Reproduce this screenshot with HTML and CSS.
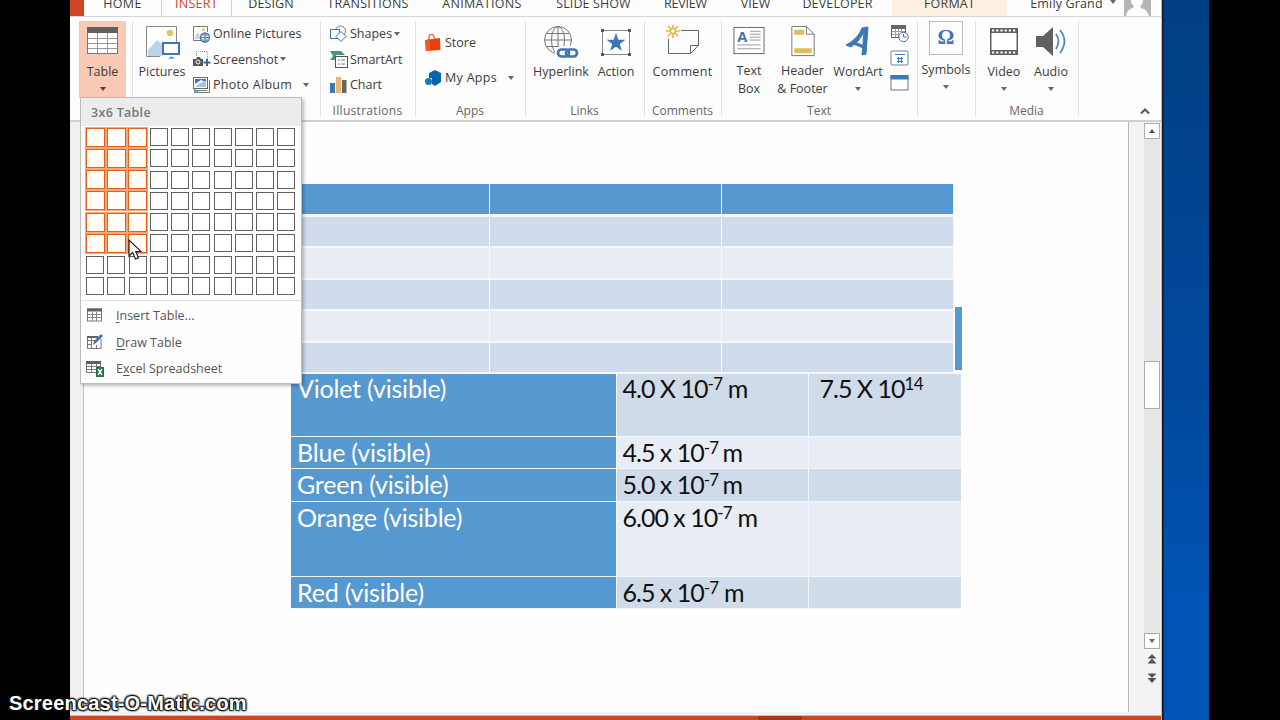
FILE: index.html
```html
<!DOCTYPE html>
<html lang="en">
<head>
  <meta charset="UTF-8">
  <meta name="viewport" content="width=device-width, initial-scale=1.0">
  <title>Presentation</title>
  <link rel="stylesheet" href="styles.css">
</head>
<body>
  <div class="window">
    <div class="tabs">
      <div class="file"></div>
      <div class="tab home"><span>HOME</span></div>
      <div class="tab insert active"><span>INSERT</span></div>
      <div class="tab design"><span>DESIGN</span></div>
      <div class="tab transitions"><span>TRANSITIONS</span></div>
      <div class="tab animations"><span>ANIMATIONS</span></div>
      <div class="tab slideshow"><span>SLIDE SHOW</span></div>
      <div class="tab review"><span>REVIEW</span></div>
      <div class="tab view"><span>VIEW</span></div>
      <div class="tab developer"><span>DEVELOPER</span></div>
      <div class="tab format"><span>FORMAT</span></div>
      <div class="tab user"><span>Emily Grand</span><i class="arrow"></i></div>
      <svg class="avatar" width="27" height="16" viewBox="0 0 27 16"><rect width="27" height="16" fill="#b5b5b5"/><path d="M7 0h12q0 4-3 6l1 2q6 1 8 8H2q1-7 7-8l1-2Q7 4 7 0z" fill="#fff"/></svg>
    </div>

    <div class="ribbon">
      <div class="group g-tables">
        <div class="big table-btn">
          <svg width="33" height="34" viewBox="0 0 33 34"><rect x="1.5" y="3.500" width="30" height="25" fill="#fff" stroke="#777"/><rect x="1" y="2" width="31" height="6" fill="#606060"/><path d="M2 13.500h29M2 18.500h29M2 23.500h29M11.500 8v20M21.500 8v20" stroke="#999" fill="none"/></svg>
          <span>Table</span>
          <i class="arrow dark"></i>
        </div>
      </div>

      <div class="group g-images">
        <div class="body">
          <div class="big pictures">
            <svg width="36" height="34" viewBox="0 0 36 34"><path d="M16 31.500H2.500v-30h30V18" fill="#fff" stroke="#888"/><circle cx="26" cy="8" r="3.300" fill="#e6c366"/><path d="M4 31v-6l9-10 5 4v12z" fill="#bdd3ea"/><rect x="19" y="18" width="16" height="11" fill="#fff" stroke="#3f76b5" stroke-width="2"/><path d="M24 33.500l3.500-2 3.500 2z" fill="#3f76b5"/></svg>
            <span>Pictures</span>
          </div>
          <div class="rows">
            <div class="row"><svg width="19" height="18" viewBox="0 0 19 18"><path d="M9 15.500H1.500v-14h14V7" fill="#fff" stroke="#777"/><path d="M3 14l1-5 3-1 1 6z" fill="#bdd3ea"/><circle cx="11.500" cy="4.500" r="1.500" fill="#e6c366"/><circle cx="13" cy="12.500" r="4.500" fill="#fff" stroke="#3f76b5" stroke-width="1.400"/><path d="M9 12.500h8M10 10h6M10 15h6M13 8v9" stroke="#3f76b5" fill="none"/></svg><span>Online Pictures</span></div>
            <div class="row"><svg width="19" height="18" viewBox="0 0 19 18"><path d="M4.500 6V1.500h11V9" fill="none" stroke="#999" stroke-dasharray="1 1"/><path d="M1 9h3l1-2h3l1 2h2v7H1z" fill="#555"/><circle cx="6" cy="12" r="2" fill="#555" stroke="#fff"/><path d="M15 9v7M11.500 12.500h7" stroke="#2f6cab" stroke-width="2"/></svg><span>Screenshot</span><i class="arrow"></i></div>
            <div class="row"><svg width="19" height="18" viewBox="0 0 19 18"><path d="M4 16.500h13.500V4M2 14.500h13" fill="none" stroke="#777"/><rect x="1.500" y="1.500" width="14" height="11" fill="#fff" stroke="#666"/><path d="M3 3h11v3L9 4 3 8z" fill="#3f76b5"/><path d="M3 11l5-4 6-2v6z" fill="#a5c7dc"/><path d="M2 17v-5l6 5z" fill="#5c9fc0"/></svg><span class="wide">Photo Album</span><i class="arrow far"></i></div>
          </div>
        </div>
        <div class="label">Images</div>
      </div>

      <div class="group g-illustrations">
        <div class="body">
          <div class="rows">
            <div class="row"><svg width="19" height="18" viewBox="0 0 19 18"><circle cx="11.500" cy="6" r="5" fill="#fff" stroke="#5a83b0"/><rect x="1.500" y="4.500" width="9" height="9" fill="#fff" stroke="#3f76b5"/><path d="M12 6.500l5 5-5 5-5-5z" fill="#fff" stroke="#3f76b5"/></svg><span>Shapes</span><i class="arrow"></i></div>
            <div class="row"><svg width="19" height="18" viewBox="0 0 19 18"><path d="M1 1h11l4 4H7v5H1l3-4z" fill="#4c9478"/><rect x="6.500" y="6.500" width="12" height="11" fill="#fff" stroke="#555"/><path d="M9 10h2M12 10h4M9 14h2M12 14h4" stroke="#777"/></svg><span>SmartArt</span></div>
            <div class="row"><svg width="19" height="18" viewBox="0 0 19 18"><rect x="1" y="7" width="5" height="10" fill="#3f76b5"/><rect x="7" y="1" width="5" height="16" fill="#edb56c"/><rect x="13" y="4" width="4.500" height="13" fill="#666"/></svg><span>Chart</span></div>
          </div>
        </div>
        <div class="label">Illustrations</div>
      </div>

      <div class="group g-apps">
        <div class="body">
          <div class="rows">
            <div class="row"><svg width="18" height="18" viewBox="0 0 18 18"><path d="M5 6V2q2-3 4-1l2 4" fill="none" stroke="#e9653b" stroke-width="1.300"/><path d="M1 6l15-2 .5 12L2 17z" fill="#e8400c"/><path d="M1 6l5-.5V17l-4-1z" fill="#f05a28"/></svg><span>Store</span></div>
            <div class="row"><svg width="18" height="18" viewBox="0 0 18 18"><path d="M5 4l6-3 6 3v9l-6 4-3-2V9H5z" fill="#0a64ad"/><circle cx="4.500" cy="12.500" r="3.500" fill="#1878c0"/></svg><span class="wide">My Apps</span><i class="arrow far"></i></div>
          </div>
        </div>
        <div class="label">Apps</div>
      </div>

      <div class="group g-links">
        <div class="body">
          <div class="big hyperlink">
            <svg width="36" height="34" viewBox="0 0 36 34"><g fill="none" stroke="#777"><circle cx="15" cy="15" r="13.500"/><ellipse cx="15" cy="15" rx="6.500" ry="13.500"/><path d="M15 1.500v27M1.500 15h27M4 8.500h22M4 21.500h22"/></g><rect x="12" y="21" width="24" height="13" rx="6" fill="#fdfdfd"/><g stroke="#3f76b5" stroke-width="2.700" fill="none"><rect x="15" y="24.500" width="11" height="7" rx="3.500"/><rect x="23" y="24.500" width="11" height="7" rx="3.500"/></g></svg>
            <span>Hyperlink</span>
          </div>
          <div class="big action">
            <svg width="32" height="34" viewBox="0 0 32 34"><rect x="2.500" y="5.500" width="27" height="24" fill="#fff" stroke="#888"/><path d="M1 4h3v3H1zM28 4h3v3h-3zM1 28h3v3H1zM28 28h3v3h-3z" fill="#555"/><path d="M16 8l2.400 6.700h7l-5.600 4.300 2.100 6.800-5.900-4.100-5.900 4.100 2.100-6.800-5.600-4.300h7z" fill="#3f76b5"/></svg>
            <span>Action</span>
          </div>
        </div>
        <div class="label">Links</div>
      </div>

      <div class="group g-comments">
        <div class="body">
          <div class="big comment">
            <svg width="36" height="34" viewBox="0 0 36 34"><path d="M3.500 14v14.500h22l8-8V5.500H16" fill="none" stroke="#666"/><path d="M25.500 28v-7.500h7.500" fill="none" stroke="#666"/><path d="M8 -1v4M8 9v4M1 6h4M11 6h4M3 1l3 3M10 8l3 3M13 1l-3 3M6 8l-3 3" stroke="#e3b84c" stroke-width="1.700"/><circle cx="8" cy="6" r="2.500" fill="#fff" stroke="#e3b84c" stroke-width="1.500"/></svg>
            <span>Comment</span>
          </div>
        </div>
        <div class="label">Comments</div>
      </div>

      <div class="group g-text">
        <div class="body">
          <div class="big textbox">
            <svg width="32" height="34" viewBox="0 0 32 34"><rect x=".5" y="2.500" width="31" height="27" fill="#fff" stroke="#666"/><text x="4" y="17" class="letter">A</text><path d="M17 6.500h11M17 9.500h11M17 12.500h11M17 15.500h11M4 20.500h24M4 24.500h24" stroke="#999"/></svg>
            <span>Text<br>Box</span>
          </div>
          <div class="big header-footer">
            <svg width="26" height="34" viewBox="0 0 26 34"><path d="M1.500 1.500h15l8 8v22h-23z" fill="#fff" stroke="#777"/><path d="M16.500 1.500v8h8" fill="none" stroke="#777"/><path d="M4 5h10v5H4zM4 24h18v5H4z" fill="#dfbd5c"/></svg>
            <span>Header<br>&amp; Footer</span>
          </div>
          <div class="big wordart">
            <svg width="28" height="34" viewBox="0 0 28 34"><path d="M2 20l5 2Q17 15 20 6l-2 24 4-1L24 2l-6 1Q14 14 2 20z" fill="#3f76b5" stroke="#3f76b5"/><path d="M10 18l10 4" stroke="#3f76b5" stroke-width="3.500"/></svg>
            <span>WordArt</span>
            <i class="arrow"></i>
          </div>
          <div class="rows icons">
            <div class="row"><svg width="19" height="19" viewBox="0 0 19 19"><rect x="1.500" y="1.500" width="14" height="12" fill="#fff" stroke="#666"/><path d="M1 1h15v4H1z" fill="#666"/><path d="M2 7.500h13M2 10.500h13M5.500 5v8M8.500 5v8M11.500 5v8" stroke="#b99a80"/><circle cx="13.500" cy="13" r="4.700" fill="#fff" stroke="#3f76b5"/><path d="M13.500 10v3h3" fill="none" stroke="#666"/></svg></div>
            <div class="row"><svg width="19" height="19" viewBox="0 0 19 19"><rect x="1" y="2" width="17" height="14" rx="1" fill="#fff" stroke="#718096"/><path d="M5 5.500h10" stroke="#3f76b5"/><path d="M7 9.500h6M7 12.500h6M8.500 8v6M11.500 8v6" stroke="#3f76b5" stroke-width="1.200"/></svg></div>
            <div class="row"><svg width="19" height="19" viewBox="0 0 19 19"><rect x="1" y="2" width="17" height="14" fill="#fff" stroke="#5c7898"/><path d="M.500 1h18v4.500H.500z" fill="#3f76b5"/></svg></div>
          </div>
        </div>
        <div class="label">Text</div>
      </div>

      <div class="group g-symbols">
        <div class="big symbols">
          <div class="omega">Ω</div>
          <span>Symbols</span>
          <i class="arrow"></i>
        </div>
      </div>

      <div class="group g-media">
        <div class="body">
          <div class="big video">
            <svg width="28" height="34" viewBox="0 0 28 34"><path d="M0 3h28v27H0z" fill="#606060"/><path d="M1.500 8h25v17h-25z" fill="#fff"/><path d="M2 5.500h25M2 27.500h25" stroke="#fff" stroke-width="2" stroke-dasharray="2.200 2"/></svg>
            <span>Video</span>
            <i class="arrow"></i>
          </div>
          <div class="big audio">
            <svg width="30" height="34" viewBox="0 0 30 34"><path d="M0 11h7L17 2v29L7 22H0z" fill="#606060"/><path d="M20 9q5 7 0 15M24 5q9 11 0 23" fill="none" stroke="#5388b8" stroke-width="1.800"/></svg>
            <span>Audio</span>
            <i class="arrow"></i>
          </div>
        </div>
        <div class="label">Media</div>
      </div>

      <svg class="collapse" width="12" height="8" viewBox="0 0 12 8"><path d="M2 6.500l4-4 4 4" fill="none" stroke="#555" stroke-width="2"/></svg>
    </div>

    <div class="workspace">
      <div class="slide">
        <table class="data">
          <tr class="r1"><th>Violet (visible)</th><td>4.0 X 10<sup>-7</sup> m</td><td class="freq">7.5 X 10<sup>14</sup></td></tr>
          <tr class="r2"><th>Blue (visible)</th><td>4.5 x 10<sup>-7 </sup>m</td><td></td></tr>
          <tr class="r3"><th>Green (visible)</th><td>5.0 x 10<sup>-7 </sup>m</td><td></td></tr>
          <tr class="r4"><th>Orange (visible)</th><td>6.00 x 10<sup>-7</sup> m</td><td></td></tr>
          <tr class="r5"><th>Red (visible)</th><td>6.5 x 10<sup>-7</sup> m</td><td></td></tr>
        </table>
        <div class="data-edge"></div>
        <table class="preview">
          <tr class="head"><td></td><td></td><td></td></tr>
          <tr><td></td><td></td><td></td></tr>
          <tr><td></td><td></td><td></td></tr>
          <tr><td></td><td></td><td></td></tr>
          <tr><td></td><td></td><td></td></tr>
          <tr><td></td><td></td><td></td></tr>
        </table>
      </div>
      <div class="scrollbar">
        <div class="scroll-btn"><i class="arrow up"></i></div>
        <div class="track"><div class="thumb"></div></div>
        <div class="scroll-btn"><i class="arrow"></i></div>
        <svg class="pager" width="16" height="46" viewBox="0 0 16 46"><path d="M8 5l4.500 4.500h-9zM8 9.500l4.500 5h-9zM3.500 24.500h9L8 29zM3.500 29h9L8 34z" fill="#555"/></svg>
      </div>
    </div>
    <div class="status"><div class="status-active"></div></div>

    <div class="menu">
      <div class="menu-title">3x6 Table</div>
      <div class="cells" id="cells"></div>
      <div class="menu-items">
        <div class="item"><svg width="18" height="16" viewBox="0 0 18 16"><rect x="1.500" y="2" width="14" height="12" fill="#fff" stroke="#777"/><path d="M1 1.500h15v3H1z" fill="#606060"/><path d="M2 7.500h13M2 10.500h13M6.500 5v9M10.500 5v9" stroke="#888"/></svg><span><u>I</u>nsert Table...</span></div>
        <div class="item"><svg width="18" height="18" viewBox="0 0 18 18"><path d="M15 6v9.500H1.500v-12H11M1 7.500h8M1 11.500h5M5.500 4v11M10.500 12v3" fill="none" stroke="#777"/><path d="M1 3h11v2H1z" fill="#606060"/><path d="M7 12l1-4 7-7 2 2-7 7z" fill="#3f76b5"/></svg><span><u>D</u>raw Table</span></div>
        <div class="item"><svg width="18" height="18" viewBox="0 0 18 18"><path d="M.500 2v10.500H10M14.500 3v4M1 6.500h13M1 9.500h9M5.500 3v10M10.500 3v5" fill="none" stroke="#777"/><path d="M0 1h15v3H0z" fill="#606060"/><rect x="10" y="7" width="8" height="10" fill="#217346"/><path d="M12 9l4 6M16 9l-4 6" stroke="#fff" stroke-width="1.400"/></svg><span>E<u>x</u>cel Spreadsheet</span></div>
      </div>
    </div>
  </div>
  <div class="desktop"></div>

  <svg class="cursor" width="14" height="22" viewBox="0 0 14 22"><path d="M1 1v16l3.700-3.500L7.500 20l3-1.200-2.800-6.300H13z" fill="#fff" stroke="#222" stroke-width="1.200"/></svg>
  <div class="watermark">Screencast-O-Matic.com</div>

  <script>
    // 10 x 8 size picker with a 3 x 6 selection
    const cells = document.getElementById("cells");
    for (let row = 0; row < 8; row++) {
      for (let col = 0; col < 10; col++) {
        const cell = document.createElement("div");
        cell.className = col < 3 && row < 6 ? "cell on" : "cell";
        cells.appendChild(cell);
      }
    }
  </script>
</body>
</html>
```
FILE: styles.css
```css
* {
  box-sizing: border-box;
}

body {
  display: flex;
  margin: 0;
  padding-left: 70px;
  width: 1280px;
  height: 720px;
  overflow: hidden;
  background: #000;
  color: #3c3c3c;
  font-family: "Open Sans", "Noto Sans", sans-serif;
  font-size: 12.5px;
}

.window {
  position: relative;
  display: flex;
  flex-direction: column;
  width: 1092px;
  height: 720px;
  background: #fdfdfd;
  border-right: 1px solid #d9a9a0;
}

.desktop {
  width: 47px;
  border-left: 2px solid #20202f;
  background: linear-gradient(#003f82, #00489a 50%, #0055b4 85%);
}

/* tabs */
.tabs {
  display: flex;
  height: 17px;
  border-bottom: 1px solid #d4d4d4;
}

.file {
  width: 14px;
  background: #d04423;
}

.tab {
  display: flex;
  justify-content: center;
  height: 16px;
  line-height: 7px;
  white-space: nowrap;
  letter-spacing: -0.2px;
}

.home { width: 77px; }
.insert { width: 71px; }
.design { width: 78px; }
.transitions { width: 116px; letter-spacing: 0.25px; }
.animations { width: 112px; letter-spacing: 0.3px; }
.slideshow { width: 111px; letter-spacing: 0.1px; }
.review { width: 73px; }
.view { width: 67px; letter-spacing: 0; }
.developer { width: 97px; margin-right: 6px; letter-spacing: 0.15px; }
.format { width: 115px; background: #fcf1e0; letter-spacing: 0.2px; }
.user { width: 117px; padding-left: 15px; letter-spacing: 0.15px; }

.insert { letter-spacing: 0.3px; }
.home { letter-spacing: 0.3px; }
.design { letter-spacing: 0.1px; }

.active {
  color: #d04423;
  border-left: 1px solid #d4d4d4;
  border-right: 1px solid #d4d4d4;
}

.user .arrow {
  margin: 0 0 0 7px;
}

/* ribbon */
.ribbon {
  display: flex;
  height: 105px;
  padding-left: 5px;
  border-bottom: 2px solid #cfcfcf;
}

.group {
  display: flex;
  flex-direction: column;
  justify-content: space-between;
  height: 102px;
  padding-top: 4px;
  background: linear-gradient(#e1e1e1, #e1e1e1) right 4px / 1px 95px no-repeat;
}

.g-tables { width: 58px; padding-left: 4px; }
.g-images { width: 188px; }
.g-illustrations { width: 95px; }
.g-apps { width: 110px; }
.g-links { width: 119px; }
.g-comments { width: 77px; }
.g-text { width: 196px; }
.g-symbols { width: 58px; }
.g-media { width: 103px; }

.body {
  display: flex;
}

.label {
  height: 17px;
  line-height: 17px;
  text-align: center;
  padding-right: 2px;
  font-size: 12px;
  color: #666;
}

.g-illustrations .label { letter-spacing: 0.3px; }

.big {
  display: flex;
  flex-direction: column;
  align-items: center;
  height: 77px;
  padding-top: 4px;
  line-height: 18px;
  text-align: center;
  white-space: nowrap;
}

.big span {
  margin-top: 4px;
}

.big .arrow {
  margin-top: 6px;
}

.table-btn { width: 47px; background: #f9cab3; }
.pictures { width: 58px; }
.hyperlink { width: 70px; }
.action { width: 40px; }
.comment { width: 75px; letter-spacing: 0.3px; }
.textbox { width: 54px; }
.header-footer { width: 53px; }
.wordart { width: 58px; }
.symbols { width: 56px; padding-top: 0; }
.video { width: 56px; }
.audio { width: 38px; }

.omega {
  width: 34px;
  height: 34px;
  margin-bottom: 2px;
  border: 1px solid #bbb;
  font: bold 21px/31px "Liberation Serif", serif;
  color: #3f76b5;
}

.letter {
  font: bold 15px "Open Sans", sans-serif;
  fill: #3f76b5;
}

.arrow {
  width: 0;
  height: 0;
  border: 3.5px solid transparent;
  border-top: 4px solid #666;
  border-bottom: 0;
}

.arrow.up {
  border-top: 0;
  border-bottom: 4px solid #555;
}

.arrow.dark {
  border-top-color: #6b3527;
}

.row {
  display: flex;
  align-items: center;
  height: 25.5px;
  white-space: nowrap;
}

.row span {
  margin-left: 2px;
}

.row .wide {
  letter-spacing: 0.3px;
}

.row .arrow {
  margin-left: 2px;
}

.row .arrow.far {
  margin-left: 11px;
}

.g-images .rows { padding-left: 1px; }
.g-illustrations .rows { padding-left: 8px; }
.g-apps .rows { padding: 4px 0 0 8px; }
.g-apps .row { height: 35px; }
.g-apps .row span { margin-left: 3px; }
.rows.icons { padding-left: 3px; }
.rows.icons .row { height: 25px; }

.collapse {
  margin: 90px 0 0 60px;
}

/* workspace */
.workspace {
  display: flex;
  height: 594px;
  padding-left: 13px;
  background: linear-gradient(90deg, #f0f0f0 13px, #f3f3f3 13px);
}

.slide {
  position: relative;
  width: 1046px;
  height: 590px;
  overflow: hidden;
  background: #fefefe;
  border-left: 1px solid #c3c3c3;
  border-right: 1px solid #b5b5b5;
}

.scrollbar {
  display: flex;
  flex-direction: column;
  width: 16px;
  height: 575px;
  margin-left: 15px;
  padding-top: 1px;
}

.scroll-btn {
  display: flex;
  flex-shrink: 0;
  align-items: center;
  justify-content: center;
  height: 16px;
  border: 1px solid #ababab;
  background: #fff;
}

.track {
  flex-shrink: 0;
  height: 494px;
  padding-top: 222px;
  background: #e7e7e7;
}

.pager {
  flex-shrink: 0;
}

.thumb {
  height: 48px;
  border: 1px solid #ababab;
  background: #fff;
}

.status {
  height: 5px;
  margin-top: auto;
  background: #d04423;
  border-top: 1px solid #e8b5a5;
}

.status-active {
  width: 44px;
  height: 4px;
  margin-left: 688px;
  background: #a93417;
}

/* tables on the slide */
table {
  position: absolute;
  table-layout: fixed;
  border-collapse: collapse;
}

th,
td {
  padding: 0;
}

.preview {
  left: 174px;
  top: 62px;
  width: 696px;
}

.preview td {
  height: 31.6px;
  border-right: 1px solid #f5f9fd;
  border-bottom: 2px solid #f5f9fd;
}

.preview tr:nth-child(odd) {
  background: #e8ecf4;
}

.preview tr:nth-child(even) {
  background: #cfdbec;
}

.preview tr.head {
  background: #5698d0;
}

.preview .head td {
  border-bottom-width: 3px;
}

.data {
  left: 207px;
  top: 252px;
  width: 670px;
  color: #111;
  font: 25px/29px Lato, "Open Sans", sans-serif;
}

.data th {
  width: 325px;
  padding-left: 6px;
  text-align: left;
  font-weight: normal;
  letter-spacing: -0.2px;
  color: #fff;
  background: #5698d0;
}

.data th,
.data td {
  padding-top: 1px;
  vertical-align: top;
  white-space: nowrap;
  border-bottom: 1px solid #f0f7fc;
}

.data .r1 th,
.data .r1 td {
  padding-top: 0;
  line-height: 28px;
}

.data td {
  width: 192px;
  padding-left: 6px;
  border-left: 1px solid #f0f7fc;
  background: #e8ecf4;
  letter-spacing: -1px;
}

.data td:last-child {
  width: 153px;
}

.data td.freq {
  padding-left: 11px;
}

.data tr:nth-child(odd) td {
  background: #cfdbe9;
}

.data sup {
  font-size: 17px;
  line-height: 0;
  letter-spacing: -0.6px;
  vertical-align: 8px;
}

.r1 { height: 63px; }
.r2 { height: 32px; }
.r3 { height: 33px; }
.r4 { height: 75px; }
.r5 { height: 32px; }

.data-edge {
  position: absolute;
  left: 871px;
  top: 185px;
  width: 7px;
  height: 63px;
  background: #5698d0;
}

/* table menu */
.menu {
  position: absolute;
  left: 10px;
  top: 97px;
  width: 222px;
  height: 287px;
  background: #fefefe;
  border: 1px solid #bcbcbc;
  box-shadow: 2px 2px 3px rgba(0, 0, 0, 0.25);
}

.menu-title {
  height: 28px;
  padding-left: 10px;
  line-height: 29px;
  font-weight: 600;
  letter-spacing: 0.3px;
  color: #777;
  background: #ececec;
}

.cells {
  display: grid;
  grid-template-columns: repeat(10, 18px);
  grid-auto-rows: 18px;
  gap: 3.28px;
  height: 174px;
  padding: 2px 0 0 5px;
}

.cell {
  border: 1px solid #606060;
  background: #fff;
}

.cell.on {
  margin: -0.5px;
  border: 1px solid #e2601c;
  outline: 1px solid #f7a878;
  background: #fffdf6;
}

.menu-items {
  border-top: 1px solid #e1e1e1;
  padding-top: 1px;
}

.item {
  display: flex;
  align-items: center;
  height: 26.8px;
  padding-left: 5px;
  color: #555;
}

.item svg {
  width: 18px;
  margin-right: 12px;
}

.item u {
  text-underline-offset: 2px;
}

.cursor {
  position: absolute;
  left: 128px;
  top: 239px;
}

.watermark {
  position: absolute;
  left: 9px;
  top: 692px;
  font: bold 20px/22px "Liberation Sans", Arial, sans-serif;
  letter-spacing: 0.2px;
  color: #fff;
  text-shadow: 0 0 2px #000, 1px 1px 2px #000, -1px -1px 2px #000, 1px -1px 1px #333, -1px 1px 1px #333;
}
```
